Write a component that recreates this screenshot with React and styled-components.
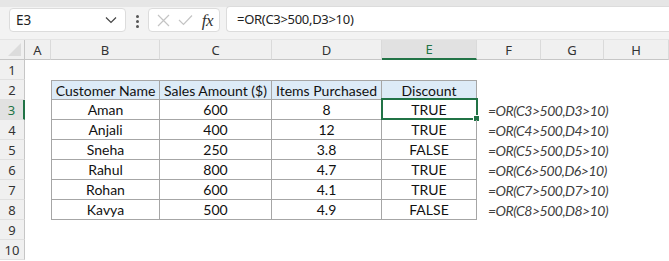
import React from "react";
import styled, { createGlobalStyle, css } from "styled-components";

const GlobalStyle = createGlobalStyle`
  html, body {
    margin: 0;
    padding: 0;
    background: #ffffff;
  }
  body {
    width: 669px;
    height: 261px;
    overflow: hidden;
    font-family: "Noto Sans", "Open Sans", sans-serif;
  }
`;

const GREEN = "#217346";
const COLS = ["A", "B", "C", "D", "E", "F", "G", "H"];
const COL_WIDTHS = "25px 26px 109px 112px 110px 95px 64px 63px 65px";

const Window = styled.div`
  width: 669px;
  height: 261px;
  display: flex;
  flex-direction: column;
  background: #fff;
`;

const TopStrip = styled.div`
  height: 7px;
  background: #e6e6e6;
`;

const Toolbar = styled.div`
  height: 33px;
  background: #f3f3f3;
  display: flex;
  align-items: flex-start;
  padding: 1px 0 0 9px;
  box-sizing: border-box;
  border-bottom: 1px solid #e4e4e4;
`;

const Box = styled.div`
  height: 24px;
  box-sizing: border-box;
  background: #fff;
  border: 1px solid #dcdcdc;
  border-radius: 4px;
  display: flex;
  align-items: center;
`;

const NameBox = styled(Box)`
  width: 117px;
  padding: 0 8px 0 6px;
  justify-content: space-between;
  font-size: 13.5px;
  color: #222;
`;

const Dots = styled.div`
  width: 22px;
  display: flex;
  flex-direction: column;
  align-items: center;
  gap: 2px;
  padding-top: 7px;
  span {
    width: 3px;
    height: 3px;
    border-radius: 50%;
    background: #555;
  }
`;

const FxBox = styled(Box)`
  width: 72px;
  padding: 0 6px 0 8px;
  justify-content: space-between;
`;

const Fx = styled.span`
  font-family: "Liberation Serif", "DejaVu Serif", serif;
  font-style: italic;
  font-size: 17px;
  color: #333;
  letter-spacing: -0.5px;
  line-height: 1;
`;

const FormulaBox = styled(Box)`
  flex: 1;
  margin-left: 6px;
  margin-top: -2px;
  height: 26px;
  border-right: none;
  border-radius: 4px 0 0 4px;
  padding-left: 10px;
  font-size: 13px;
  letter-spacing: -0.3px;
  color: #222;
`;

const Sheet = styled.div`
  display: grid;
  grid-template-columns: ${COL_WIDTHS};
  grid-auto-rows: 20px;
  overflow: hidden;
`;

const HeadCell = styled.div`
  background: ${(p) => (p.$active ? "#e1e1e1" : "#f0f0f0")};
  color: ${(p) => (p.$active ? GREEN : "#333")};
  font-size: 13px;
  display: flex;
  align-items: center;
  justify-content: center;
  box-sizing: border-box;
  border-bottom: ${(p) => (p.$active ? `2px solid ${GREEN}` : "1px solid #c6c6c6")};
  border-right: 1px solid #dadada;
`;

const Corner = styled.div`
  background: #f0f0f0;
  border-bottom: 1px solid #c6c6c6;
  border-right: 1px solid #c6c6c6;
  box-sizing: border-box;
  position: relative;
  &::after {
    content: "";
    position: absolute;
    right: 3px;
    bottom: 3px;
    border-left: 13px solid transparent;
    border-bottom: 13px solid #dcdcdc;
  }
`;

const RowHead = styled.div`
  background: ${(p) => (p.$active ? "#e1e1e1" : "#f0f0f0")};
  color: ${(p) => (p.$active ? GREEN : "#333")};
  font-size: 13px;
  display: flex;
  align-items: center;
  justify-content: center;
  box-sizing: border-box;
  border-right: ${(p) => (p.$active ? `2px solid ${GREEN}` : "1px solid #c6c6c6")};
  border-bottom: 1px solid #e0e0e0;
`;

const Cell = styled.div`
  position: relative;
  box-sizing: border-box;
  font-family: "Lato", "Liberation Sans", sans-serif;
  font-size: 14px;
  color: #111;
  display: flex;
  align-items: center;
  justify-content: center;
  white-space: nowrap;
  ${(p) =>
    p.$table &&
    css`
      border-right: 1px solid #a6a6a6;
      border-bottom: 1px solid #a6a6a6;
    `}
  ${(p) => p.$first && "border-left: 1px solid #a6a6a6;"}
  ${(p) => p.$top && "border-top: 1px solid #a6a6a6;"}
  ${(p) => p.$head && "background: #ddebf7;"}
`;

const FormulaText = styled(Cell)`
  justify-content: flex-start;
  padding-left: 11px;
  font-style: italic;
  letter-spacing: -0.5px;
  color: #404040;
  overflow: visible;
  z-index: 1;
`;

const Selection = styled.div`
  position: absolute;
  left: -1px;
  top: -2px;
  right: -2px;
  bottom: -1px;
  border: 2px solid ${GREEN};
  pointer-events: none;
  &::after {
    content: "";
    position: absolute;
    right: -4px;
    bottom: -4px;
    width: 5px;
    height: 5px;
    background: ${GREEN};
    border: 1px solid #fff;
  }
`;

const headers = ["Customer Name", "Sales Amount ($)", "Items Purchased", "Discount"];
const rows = [
  ["Aman", "600", "8", "TRUE"],
  ["Anjali", "400", "12", "TRUE"],
  ["Sneha", "250", "3.8", "FALSE"],
  ["Rahul", "800", "4.7", "TRUE"],
  ["Rohan", "600", "4.1", "TRUE"],
  ["Kavya", "500", "4.9", "FALSE"],
];

const Chevron = () => (
  <svg width="12" height="8" viewBox="0 0 12 8">
    <path d="M1 1.5 L6 6.5 L11 1.5" fill="none" stroke="#444" strokeWidth="1.2" />
  </svg>
);

const CancelIcon = () => (
  <svg width="13" height="13" viewBox="0 0 13 13">
    <path d="M1 1 L12 12 M12 1 L1 12" stroke="#c4c4c4" strokeWidth="1.2" />
  </svg>
);

const EnterIcon = () => (
  <svg width="15" height="12" viewBox="0 0 15 12">
    <path d="M1 6 L5.5 10.5 L14 1.5" fill="none" stroke="#c4c4c4" strokeWidth="1.2" />
  </svg>
);

const renderRow = (r) => {
  const rowNum = r + 1;
  const cells = [];
  for (let c = 0; c < 8; c++) {
    const key = `${rowNum}-${c}`;
    const dataRow = rowNum - 2;
    if (rowNum >= 2 && rowNum <= 8 && c >= 1 && c <= 4) {
      const isHead = rowNum === 2;
      const text = isHead ? headers[c - 1] : rows[dataRow - 1][c - 1];
      cells.push(
        <Cell key={key} $table $first={c === 1} $top={isHead} $head={isHead}>
          {text}
          {rowNum === 3 && c === 4 && <Selection />}
        </Cell>
      );
    } else if (rowNum >= 3 && rowNum <= 8 && c === 5) {
      cells.push(
        <FormulaText key={key}>{`=OR(C${rowNum}>500,D${rowNum}>10)`}</FormulaText>
      );
    } else {
      cells.push(<Cell key={key} />);
    }
  }
  return cells;
};

export default function App() {
  return (
    <Window>
      <GlobalStyle />
      <TopStrip />
      <Toolbar>
        <NameBox>
          <span>E3</span>
          <Chevron />
        </NameBox>
        <Dots>
          <span />
          <span />
          <span />
        </Dots>
        <FxBox>
          <CancelIcon />
          <EnterIcon />
          <Fx>fx</Fx>
        </FxBox>
        <FormulaBox>=OR(C3&gt;500,D3&gt;10)</FormulaBox>
      </Toolbar>
      <Sheet>
        <Corner />
        {COLS.map((c) => (
          <HeadCell key={c} $active={c === "E"}>
            {c}
          </HeadCell>
        ))}
        {Array.from({ length: 10 }).map((_, r) => (
          <React.Fragment key={r}>
            <RowHead $active={r + 1 === 3}>{r + 1}</RowHead>
            {renderRow(r)}
          </React.Fragment>
        ))}
      </Sheet>
    </Window>
  );
}
